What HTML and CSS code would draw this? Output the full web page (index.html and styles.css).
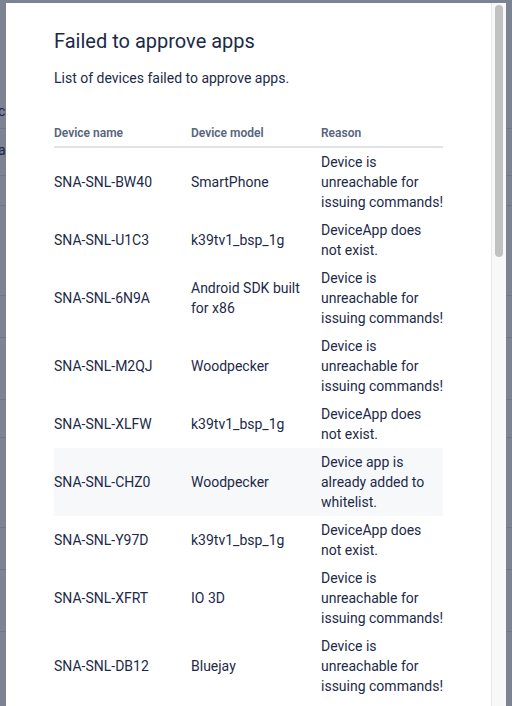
FILE: index.html
```html
<!DOCTYPE html>
<html lang="en">
<head>
<meta charset="utf-8">
<title>Failed to approve apps</title>
<link rel="stylesheet" href="styles.css">
</head>
<body>
<div class="page">
  <div class="page-row r1"><span class="page-text">c</span></div>
  <div class="page-row r2"><span class="page-text">a</span></div>
  <div class="page-row r3"></div>
  <div class="page-row r4"></div>
  <div class="page-row r5"></div>
  <div class="page-row r6"></div>
  <div class="page-row r7"></div>
  <div class="page-row r8"></div>
  <div class="page-row r9"></div>
  <div class="page-row r10"></div>
  <div class="page-row r11"></div>
</div>
<div class="overlay"></div>
<div class="modal" role="dialog" aria-labelledby="modal-title">
  <div class="modal-body">
    <h2 class="modal-title" id="modal-title">Failed to approve apps</h2>
    <p class="modal-desc">List of devices failed to approve apps.</p>
    <table class="dev-table">
      <thead>
        <tr><th class="col-name">Device name</th><th class="col-model">Device model</th><th class="col-reason">Reason</th></tr>
      </thead>
      <tbody>
        <tr><td>SNA-SNL-BW40</td><td>SmartPhone</td><td>Device is unreachable for issuing commands!</td></tr>
        <tr><td>SNA-SNL-U1C3</td><td>k39tv1_bsp_1g</td><td>DeviceApp does not exist.</td></tr>
        <tr><td>SNA-SNL-6N9A</td><td>Android SDK built for x86</td><td>Device is unreachable for issuing commands!</td></tr>
        <tr><td>SNA-SNL-M2QJ</td><td>Woodpecker</td><td>Device is unreachable for issuing commands!</td></tr>
        <tr><td>SNA-SNL-XLFW</td><td>k39tv1_bsp_1g</td><td>DeviceApp does not exist.</td></tr>
        <tr class="is-hover"><td>SNA-SNL-CHZ0</td><td>Woodpecker</td><td>Device app is already added to whitelist.</td></tr>
        <tr><td>SNA-SNL-Y97D</td><td>k39tv1_bsp_1g</td><td>DeviceApp does not exist.</td></tr>
        <tr><td>SNA-SNL-XFRT</td><td>IO 3D</td><td>Device is unreachable for issuing commands!</td></tr>
        <tr><td>SNA-SNL-DB12</td><td>Bluejay</td><td>Device is unreachable for issuing commands!</td></tr>
      </tbody>
    </table>
  </div>
  <div class="scrollbar" aria-hidden="true"><div class="scroll-thumb"></div></div>
</div>
</body>
</html>
```

FILE: styles.css
```css
* { box-sizing: border-box; }

html, body {
  margin: 0;
  padding: 0;
  height: 100%;
  overflow: hidden;
}

body {
  font-family: Roboto, "Noto Sans", "Liberation Sans", sans-serif;
  background: #ffffff;
  color: #1c2a48;
}

/* page behind the dialog */
.page {
  display: flex;
  flex-direction: column;
}

.page-row {
  border-bottom: 1px solid #e2e4e8;
  display: flex;
  align-items: flex-end;
  font-size: 14px;
  line-height: 20px;
  color: #1c2a48;
}

.page-text { margin-left: -2px; }

.r1 { height: 129px; padding-bottom: 7px; }
.r2 { height: 47px; padding-bottom: 15px; }
.r3 { height: 30px; }
.r4 { height: 90px; }
.r5 { height: 42px; }
.r6 { height: 62px; }
.r7 { height: 38px; }
.r8 { height: 90px; }
.r9 { height: 42px; }
.r10 { height: 62px; }
.r11 { height: 120px; }

.overlay {
  position: fixed;
  inset: 0;
  background: rgba(21, 34, 63, 0.56);
}

/* dialog */
.modal {
  position: fixed;
  top: 3px;
  left: 6px;
  width: 500px;
  bottom: 0;
  background: #ffffff;
  display: flex;
}

.modal-body {
  flex: 1;
  overflow: hidden;
  padding: 24px 48px 48px 48px;
}

.scrollbar {
  width: 15px;
  flex: none;
  background: #f8f8f8;
  border-left: 1px solid #e8e8e8;
  padding: 2px 3px 0 3px;
}

.scroll-thumb {
  height: 252px;
  background: #c1c1c1;
  border-radius: 4px;
}

.modal-title {
  margin: 0;
  font-size: 20px;
  line-height: 28px;
  font-weight: 400;
  color: #1c2a48;
}

.modal-desc {
  margin: 13px 0 0;
  font-size: 14px;
  line-height: 20px;
  color: #1c2a48;
}

.dev-table {
  margin-top: 32px;
  width: 389px;
  border-collapse: collapse;
  table-layout: fixed;
  font-size: 14px;
  line-height: 20px;
}

.col-name { width: 137px; }
.col-model { width: 130px; }
.col-reason { width: 122px; }

.dev-table th {
  text-align: left;
  font-size: 12px;
  line-height: 16px;
  font-weight: 600;
  color: #56647e;
  padding: 5px 16px 5px 0;
  border-bottom: 2px solid #dfe2e7;
}

.dev-table td {
  padding: 4px 16px 4px 0;
  vertical-align: middle;
  color: #1c2a48;
}

.dev-table th:last-child,
.dev-table td:last-child { padding-right: 0; }

.dev-table tr.is-hover td { background: #f7f8fa; }
```
